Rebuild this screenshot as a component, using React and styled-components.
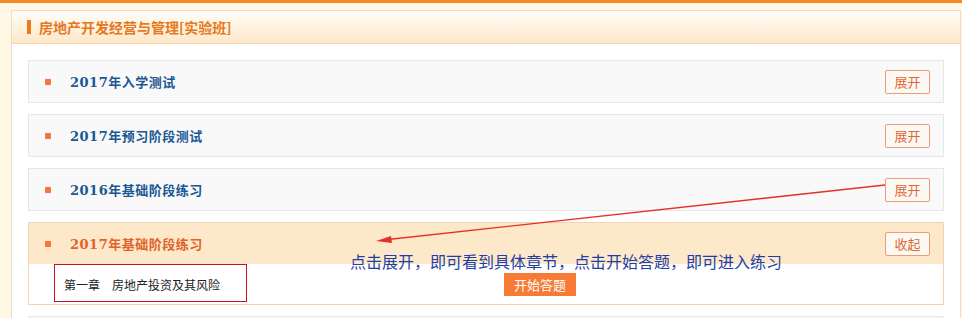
import React from "react";
import styled, { createGlobalStyle } from "styled-components";

const GlobalStyle = createGlobalStyle`
  html, body {
    margin: 0;
    padding: 0;
    background: #fff8e5;
    font-family: "Noto Sans CJK SC", "Liberation Sans", sans-serif;
  }
`;

const Page = styled.div`
  position: relative;
  width: 962px;
  min-height: 318px;
  border-top: 3px solid #f58a26;
  box-sizing: border-box;
  padding: 7px 1px 0 11px;
`;

const Panel = styled.div`
  background: #ffffff;
  border: 1px solid #f1dcbf;
  border-bottom: none;
`;

const PanelHeader = styled.div`
  display: flex;
  align-items: center;
  gap: 8px;
  height: 32px;
  padding-left: 15px;
  background: linear-gradient(#fffdf8, #fde7c8);
  border-bottom: 1px solid #f4d9b6;
`;

const HeaderBar = styled.span`
  width: 4px;
  height: 14px;
  background: #ee7a1a;
`;

const HeaderTitle = styled.h2`
  margin: 0;
  font-size: 14px;
  font-weight: bold;
  color: #e5791c;
`;

const List = styled.div`
  display: flex;
  flex-direction: column;
  gap: 11px;
  padding: 16px 16px 0 16px;
`;

const Item = styled.div`
  position: relative;
  border: 1px solid ${(p) => (p.$open ? "#f0d3b4" : "#e7e7e7")};
  background: #ffffff;
`;

const ItemHead = styled.div`
  display: flex;
  align-items: center;
  height: 41px;
  padding: 0 13px 0 16px;
  background: ${(p) => (p.$open ? "#fde9c9" : "#f9f9f9")};
`;

const Bullet = styled.span`
  width: 6px;
  height: 6px;
  background: #f4773e;
  margin-right: 19px;
`;

const ItemTitle = styled.span`
  flex: 1;
  font-family: "DejaVu Serif", "Noto Sans CJK SC", serif;
  font-size: 13px;
  font-weight: bold;
  letter-spacing: 0.5px;
  color: ${(p) => (p.$open ? "#e2622b" : "#1b5895")};
`;

const ToggleButton = styled.button`
  width: 45px;
  height: 24px;
  padding: 0;
  border: 1px solid #eb9c78;
  border-radius: 2px;
  background: #fcf8f4;
  color: #e0692f;
  font-family: "Noto Sans CJK SC", sans-serif;
  font-size: 13px;
  line-height: 22px;
`;

const ItemBody = styled.div`
  display: flex;
  align-items: center;
  height: 40px;
  padding-left: 35px;
`;

const Chapter = styled.div`
  position: relative;
  width: 440px;
  font-size: 12px;
  color: #222;
`;

const Highlight = styled.span`
  position: absolute;
  left: -10px;
  top: -12px;
  width: 191px;
  height: 36px;
  border: 1px solid #c8141a;
`;

const StartButton = styled.button`
  width: 72px;
  height: 23px;
  padding: 0;
  border: none;
  background: #f77b35;
  color: #ffffff;
  font-family: "Noto Sans CJK SC", sans-serif;
  font-size: 13px;
  line-height: 23px;
`;

const Note = styled.div`
  position: absolute;
  left: 350px;
  top: 249px;
  font-size: 16px;
  line-height: 18px;
  color: #1f3ea6;
  white-space: nowrap;
  pointer-events: none;
`;

const Overlay = styled.svg`
  position: absolute;
  left: 0;
  top: 0;
  pointer-events: none;
`;

const items = [
  { title: "2017年入学测试" },
  { title: "2017年预习阶段测试" },
  { title: "2016年基础阶段练习" },
  { title: "2017年基础阶段练习", open: true, chapters: ["第一章　房地产投资及其风险"] },
  { title: "2016年预习阶段测试" },
];

export default function App() {
  return (
    <>
      <GlobalStyle />
      <Page>
        <Panel>
          <PanelHeader>
            <HeaderBar />
            <HeaderTitle>房地产开发经营与管理[实验班]</HeaderTitle>
          </PanelHeader>
          <List>
            {items.map((item, i) => (
              <Item key={i} $open={item.open}>
                <ItemHead $open={item.open}>
                  <Bullet />
                  <ItemTitle $open={item.open}>{item.title}</ItemTitle>
                  <ToggleButton>{item.open ? "收起" : "展开"}</ToggleButton>
                </ItemHead>
                {item.open &&
                  item.chapters.map((c, j) => (
                    <ItemBody key={j}>
                      <Chapter>
                        {c}
                        <Highlight />
                      </Chapter>
                      <StartButton>开始答题</StartButton>
                    </ItemBody>
                  ))}
              </Item>
            ))}
          </List>
        </Panel>
        <Note>点击展开，即可看到具体章节，点击开始答题，即可进入练习</Note>
        <Overlay width="962" height="318" viewBox="0 0 962 318">
          <line x1="885" y1="182" x2="388" y2="236.5" stroke="#e5302a" strokeWidth="1.3" />
          <polygon points="376,238 391,233 392,240" fill="#e5302a" />
        </Overlay>
      </Page>
    </>
  );
}
